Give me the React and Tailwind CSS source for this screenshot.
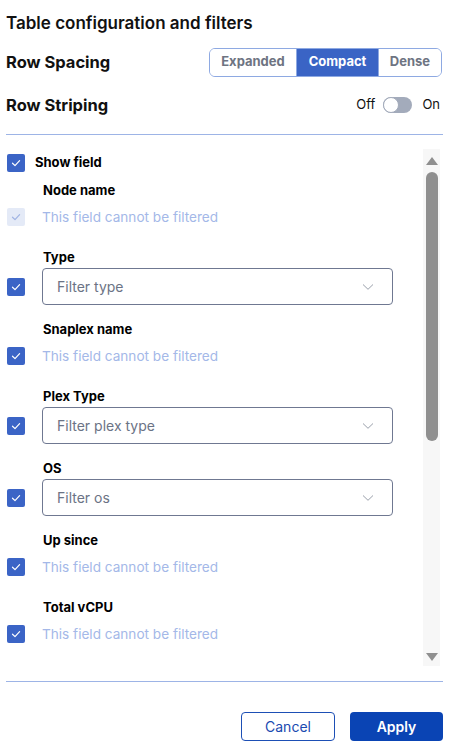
import React, { useState } from 'react'

const font = { fontFamily: 'Inter, "Noto Sans", sans-serif' }

const Check = ({ disabled }) => (
  <div
    className={`w-[18px] h-[18px] rounded-[2px] flex items-center justify-center shrink-0 ${
      disabled ? 'bg-[#e4eaf7]' : 'bg-[#3b64c6]'
    }`}
  >
    <svg width="12" height="12" viewBox="0 0 12 12" fill="none">
      <path
        d="M2.5 6.2 L5 8.6 L9.6 3.6"
        stroke={disabled ? '#9fb3e3' : '#ffffff'}
        strokeWidth="1.2"
        strokeLinecap="round"
        strokeLinejoin="round"
      />
    </svg>
  </div>
)

const Label = ({ children }) => (
  <div className="h-[20px] flex items-center pl-[36px] text-[13px] font-bold text-black">{children}</div>
)

const NoFilter = ({ label, disabled }) => (
  <div className="mb-[15px]">
    <Label>{label}</Label>
    <div className="h-[32px] flex items-center">
      <Check disabled={disabled} />
      <span className="ml-[17px] text-[13.6px] text-[#a4b8e8]">This field cannot be filtered</span>
    </div>
  </div>
)

const SelectField = ({ label, placeholder }) => (
  <div className="mb-[15px]">
    <Label>{label}</Label>
    <div className="flex items-center">
      <Check />
      <div className="ml-[17px] w-[351px] h-[37px] border border-[#6f7891] rounded-[4px] flex items-center justify-between pl-[14px] pr-[18px]">
        <span className="text-[14px] text-[#6b7385]">{placeholder}</span>
        <svg width="12" height="8" viewBox="0 0 12 8" fill="none">
          <path d="M1 1.5 L6 6.3 L11 1.5" stroke="#9aa0ab" strokeWidth="1" />
        </svg>
      </div>
    </div>
  </div>
)

export default function App() {
  const [spacing, setSpacing] = useState('Compact')
  return (
    <div className="w-[450px] h-[746px] bg-white flex flex-col pl-[6px] pr-[7px]" style={font}>
      <div className="h-[44px] pt-[3px] flex items-center text-[17px] font-semibold text-[#111]">
        Table configuration and filters
      </div>
      <div className="h-[36px] flex items-center justify-between">
        <span className="text-[16.5px] font-bold text-[#111]">Row Spacing</span>
        <div className="flex h-[29px] border border-[#8ea9e2] rounded-[6px] overflow-hidden mr-[1px]">
          {['Expanded', 'Compact', 'Dense'].map((s, i) => (
            <button
              key={s}
              onClick={() => setSpacing(s)}
              className={`text-[13px] font-bold flex items-center justify-center ${
                i === 0 ? 'w-[86px]' : i === 1 ? 'w-[82px]' : 'w-[63px]'
              } ${i > 0 ? 'border-l border-[#8ea9e2]' : ''} ${
                spacing === s ? 'bg-[#3a64c5] text-white' : 'bg-white text-[#6e7482]'
              }`}
            >
              {s}
            </button>
          ))}
        </div>
      </div>
      <div className="h-[50px] flex items-center justify-between">
        <span className="text-[16.5px] font-bold text-[#111]">Row Striping</span>
        <div className="flex items-center text-[13px] text-[#111] mr-[3px]">
          <span>Off</span>
          <div className="ml-[8px] w-[29px] h-[16px] rounded-full bg-[#a3abbb] flex items-center">
            <div className="w-[16px] h-[16px] rounded-full bg-white border border-[#a3abbb]" />
          </div>
          <span className="ml-[10px]">On</span>
        </div>
      </div>
      <div className="h-px bg-[#9db4e6] mt-[4px]" />

      <div className="flex mt-[14px] h-[517px]">
        <div className="flex-1 pt-[5px] pl-px overflow-hidden">
          <div className="flex items-center h-[18px] mb-[9px]">
            <Check />
            <span className="ml-[10px] text-[13px] font-bold text-black">Show field</span>
          </div>
          <NoFilter label="Node name" disabled />
          <SelectField label="Type" placeholder="Filter type" />
          <NoFilter label="Snaplex name" />
          <SelectField label="Plex Type" placeholder="Filter plex type" />
          <SelectField label="OS" placeholder="Filter os" />
          <NoFilter label="Up since" />
          <NoFilter label="Total vCPU" />
        </div>
        <div className="w-[17px] bg-[#f7f7f7] flex flex-col items-center mr-[3px]">
          <svg className="mt-[8px]" width="12" height="8" viewBox="0 0 12 8">
            <path d="M6 0 L12 8 L0 8 Z" fill="#8f8f8f" />
          </svg>
          <div className="mt-[7px] w-[12px] h-[269px] rounded-full bg-[#8f8f8f] ml-px" />
          <div className="flex-1" />
          <svg className="mb-[5px]" width="12" height="8" viewBox="0 0 12 8">
            <path d="M0 0 L12 0 L6 8 Z" fill="#8f8f8f" />
          </svg>
        </div>
      </div>

      <div className="h-px bg-[#9db4e6] mt-[15px]" />
      <div className="flex justify-end gap-[15px] mt-[30px]">
        <button className="w-[94px] h-[29px] rounded-[4px] border border-[#1d4fb5] text-[14px] text-[#1a4ab0] bg-white">
          Cancel
        </button>
        <button className="w-[93px] h-[29px] rounded-[4px] bg-[#0a44b4] text-[14px] font-semibold text-white">
          Apply
        </button>
      </div>
    </div>
  )
}
